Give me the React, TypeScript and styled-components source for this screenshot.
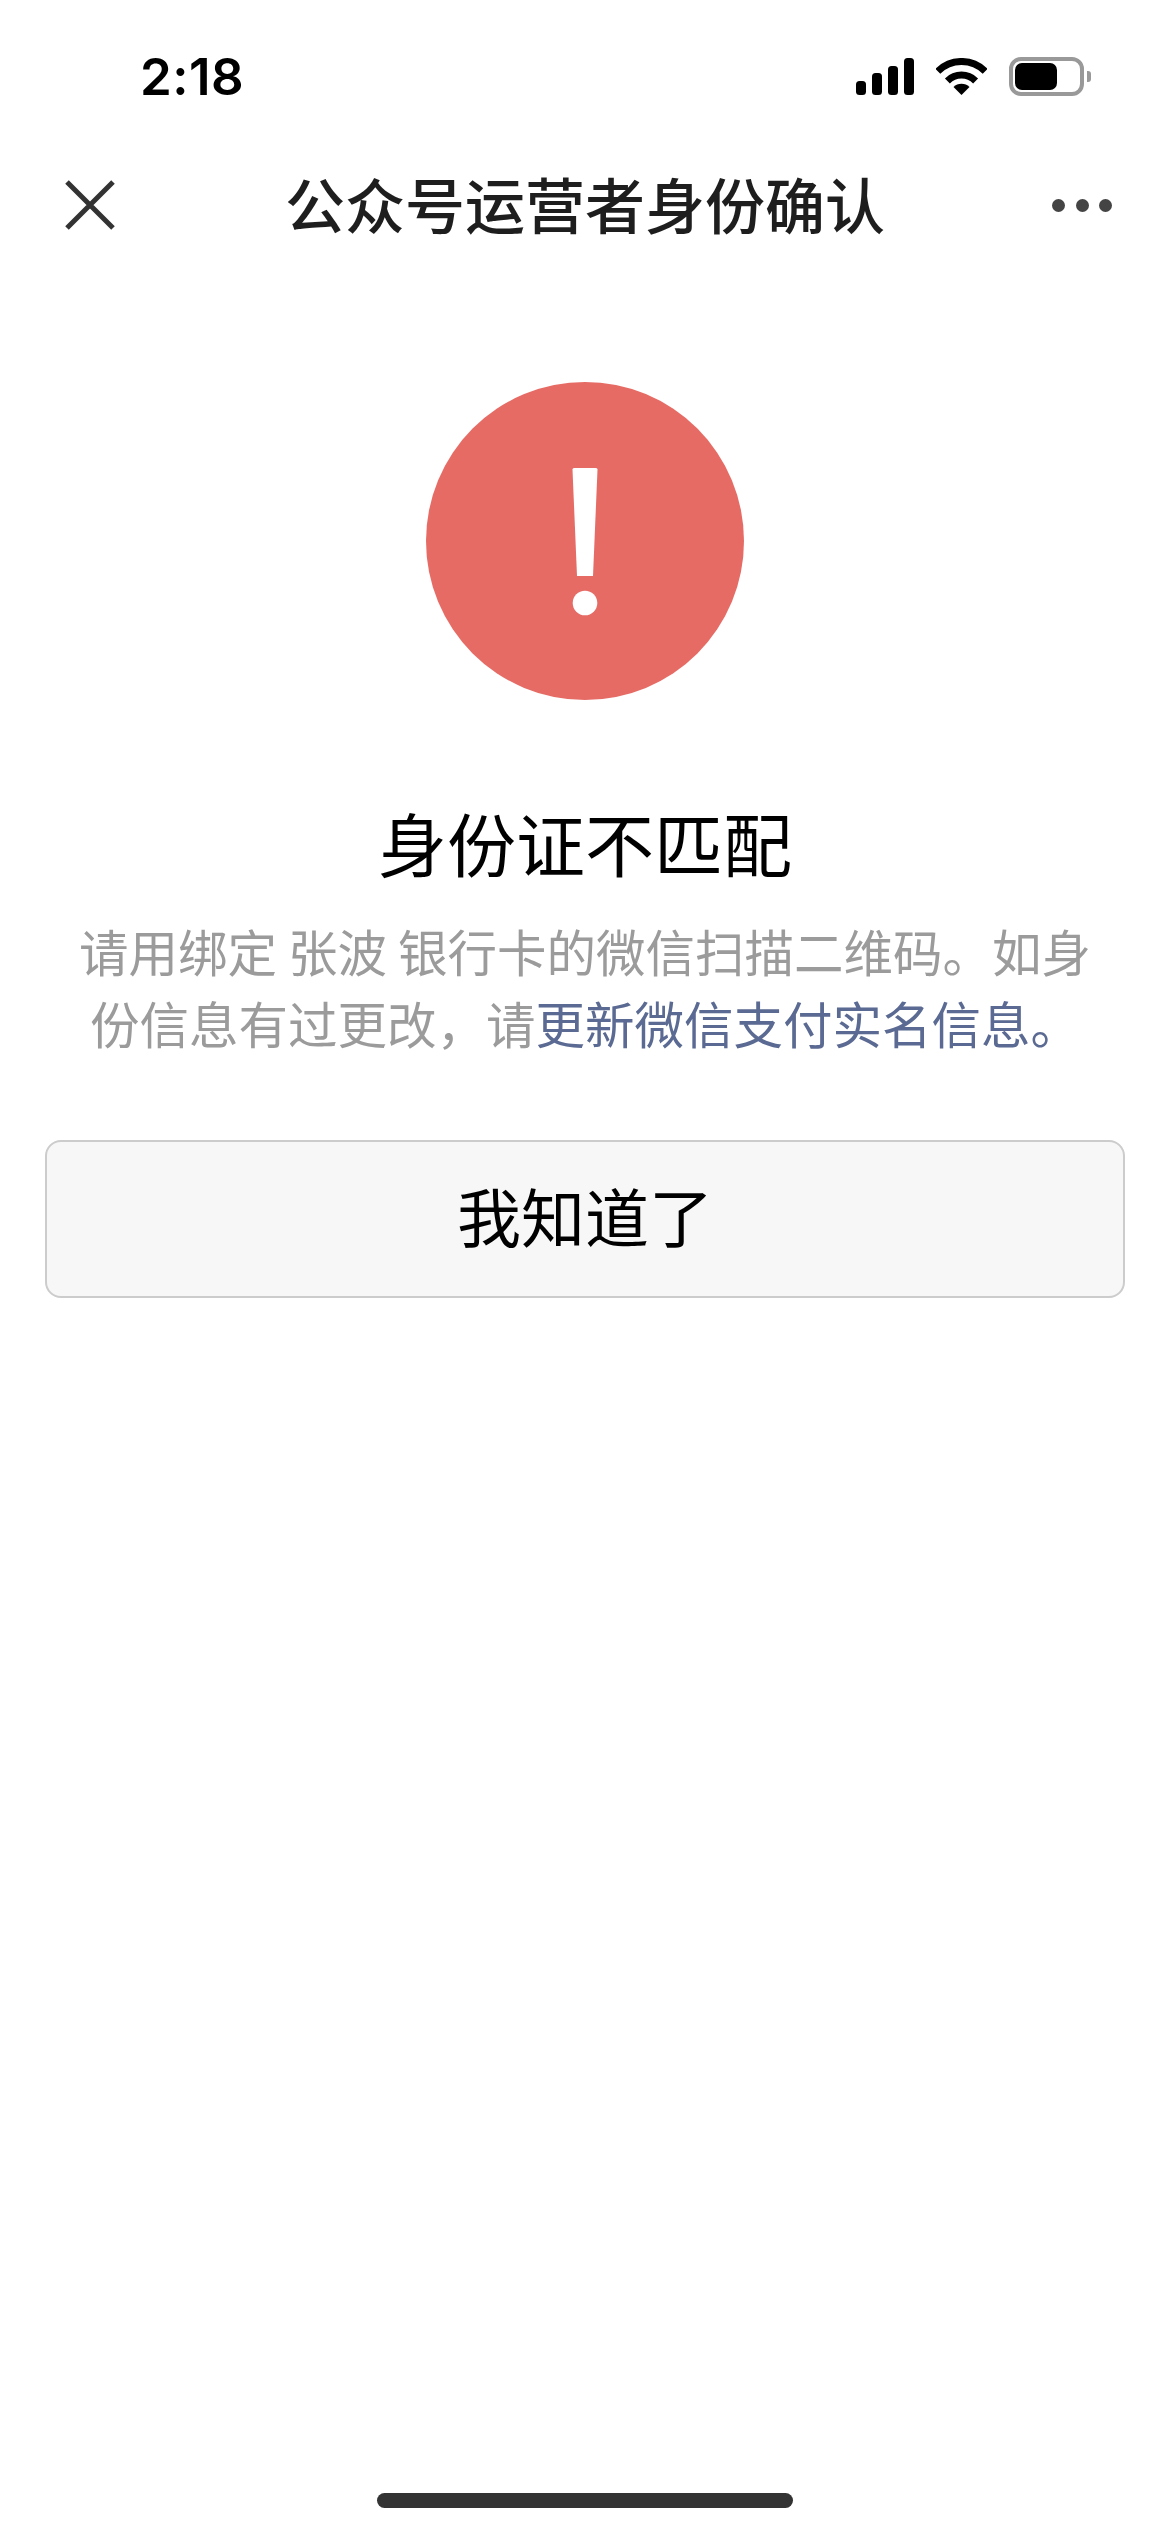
import React from "react";
import styled, { createGlobalStyle } from "styled-components";

const Global = createGlobalStyle`
  html, body { margin: 0; padding: 0; background: #fff; }
  * { box-sizing: border-box; }
`;

const cjk = `"Noto Sans CJK SC", "Noto Sans", sans-serif`;

const Page = styled.div`
  width: 1170px;
  height: 2532px;
  display: flex;
  flex-direction: column;
  background: #fff;
  font-family: ${cjk};
  overflow: hidden;
`;

const StatusBar = styled.div`
  height: 76px;
  margin-top: 38px;
  padding: 0 79px 0 140px;
  display: flex;
  align-items: center;
  justify-content: space-between;
`;

const Time = styled.span`
  font-family: Inter, "Liberation Sans", sans-serif;
  font-size: 51px;
  font-weight: 600;
  letter-spacing: 0.5px;
  line-height: 1;
  color: #000;
`;

const StatusIcons = styled.div`
  display: flex;
  align-items: center;
  gap: 22px;
`;

const Battery = styled.div`
  display: flex;
  align-items: center;
  gap: 3px;
`;

const BatteryBody = styled.div`
  width: 75px;
  height: 39px;
  padding: 2px;
  border: 4px solid #999;
  border-radius: 12px;
`;

const BatteryFill = styled.div`
  width: 42px;
  height: 100%;
  background: #000;
  border-radius: 7px;
`;

const BatteryNub = styled.div`
  width: 4px;
  height: 11px;
  background: #999;
  border-radius: 0 3px 3px 0;
`;

const NavBar = styled.div`
  height: 110px;
  margin-top: 36px;
  padding: 0 58px;
  display: grid;
  grid-template-columns: 1fr auto 1fr;
  align-items: center;
`;

const CloseWrap = styled.div`
  display: flex;
  padding-left: 7px;
`;

const NavTitle = styled.h1`
  margin: 0 0 5px;
  font-size: 60px;
  font-weight: 500;
  line-height: 1;
  color: #1e1e1e;
`;

const Dots = styled.div`
  display: flex;
  justify-content: flex-end;
  gap: 10.5px;
`;

const Dot = styled.span`
  width: 13px;
  height: 13px;
  border-radius: 50%;
  background: #444;
`;

const Main = styled.main`
  display: flex;
  flex-direction: column;
  align-items: center;
  padding: 122px 45px 0;
`;

const AlertIcon = styled.svg`
  display: block;
  width: 318px;
  height: 318px;
`;

const Heading = styled.h2`
  margin: 98px 0 0;
  font-size: 69px;
  font-weight: 400;
  line-height: 88px;
  color: #000;
`;

const Description = styled.p`
  margin: 29px 0 0;
  width: 1040px;
  font-size: 49.5px;
  font-weight: 400;
  line-height: 72px;
  text-align: center;
  color: #9b9b9b;
`;

const Link = styled.span`
  color: #5b6a92;
`;

const Button = styled.button`
  width: 100%;
  height: 158px;
  margin-top: 81px;
  padding: 0 0 10px;
  border: 2px solid #ccc;
  border-radius: 16px;
  background: #f7f7f7;
  font-family: ${cjk};
  font-size: 64px;
  font-weight: 400;
  color: #000;
`;

const HomeBar = styled.div`
  width: 416px;
  height: 15px;
  margin: auto auto 24px;
  border-radius: 8px;
  background: #333;
`;

export default function App() {
  return (
    <Page>
      <Global />
      <StatusBar>
        <Time>2:18</Time>
        <StatusIcons>
          <svg width="58" height="37" viewBox="0 0 58 37" fill="#000">
            <rect x="0" y="23" width="10" height="14" rx="3.5" />
            <rect x="16" y="15" width="10" height="22" rx="3.5" />
            <rect x="32" y="8" width="10" height="29" rx="3.5" />
            <rect x="48" y="0" width="10" height="37" rx="3.5" />
          </svg>
          <svg width="51" height="37" viewBox="0 0 51 37">
            <path d="M1.8 13.3A33.5 33.5 0 0 1 49.2 13.3" fill="none" stroke="#000" strokeWidth="7" />
            <path d="M11.4 22.9A20 20 0 0 1 39.6 22.9" fill="none" stroke="#000" strokeWidth="7" />
            <path d="M25.5 37L17.5 29A11.3 11.3 0 0 1 33.5 29Z" fill="#000" />
          </svg>
          <Battery>
            <BatteryBody>
              <BatteryFill />
            </BatteryBody>
            <BatteryNub />
          </Battery>
        </StatusIcons>
      </StatusBar>
      <NavBar>
        <CloseWrap>
          <svg width="50" height="50" viewBox="0 0 50 50" fill="none" stroke="#333" strokeWidth="5">
            <path d="M2 2L48 48M48 2L2 48" />
          </svg>
        </CloseWrap>
        <NavTitle>公众号运营者身份确认</NavTitle>
        <Dots>
          <Dot />
          <Dot />
          <Dot />
        </Dots>
      </NavBar>
      <Main>
        <AlertIcon viewBox="0 0 318 318">
          <circle cx="159" cy="159" r="159" fill="#e66b65" />
          <path d="M148 86H170a1.5 1.5 0 0 1 1.5 1.5L167 194H151L146.500 87.500a1.500 1.500 0 0 1 1.500-1.500Z" fill="#fff" />
          <circle cx="159" cy="221" r="12.3" fill="#fff" />
        </AlertIcon>
        <Heading>身份证不匹配</Heading>
        <Description>
          请用绑定 张波 银行卡的微信扫描二维码。如身份信息有过更改，请
          <Link>更新微信支付实名信息。</Link>
        </Description>
        <Button>我知道了</Button>
      </Main>
      <HomeBar />
    </Page>
  );
}
